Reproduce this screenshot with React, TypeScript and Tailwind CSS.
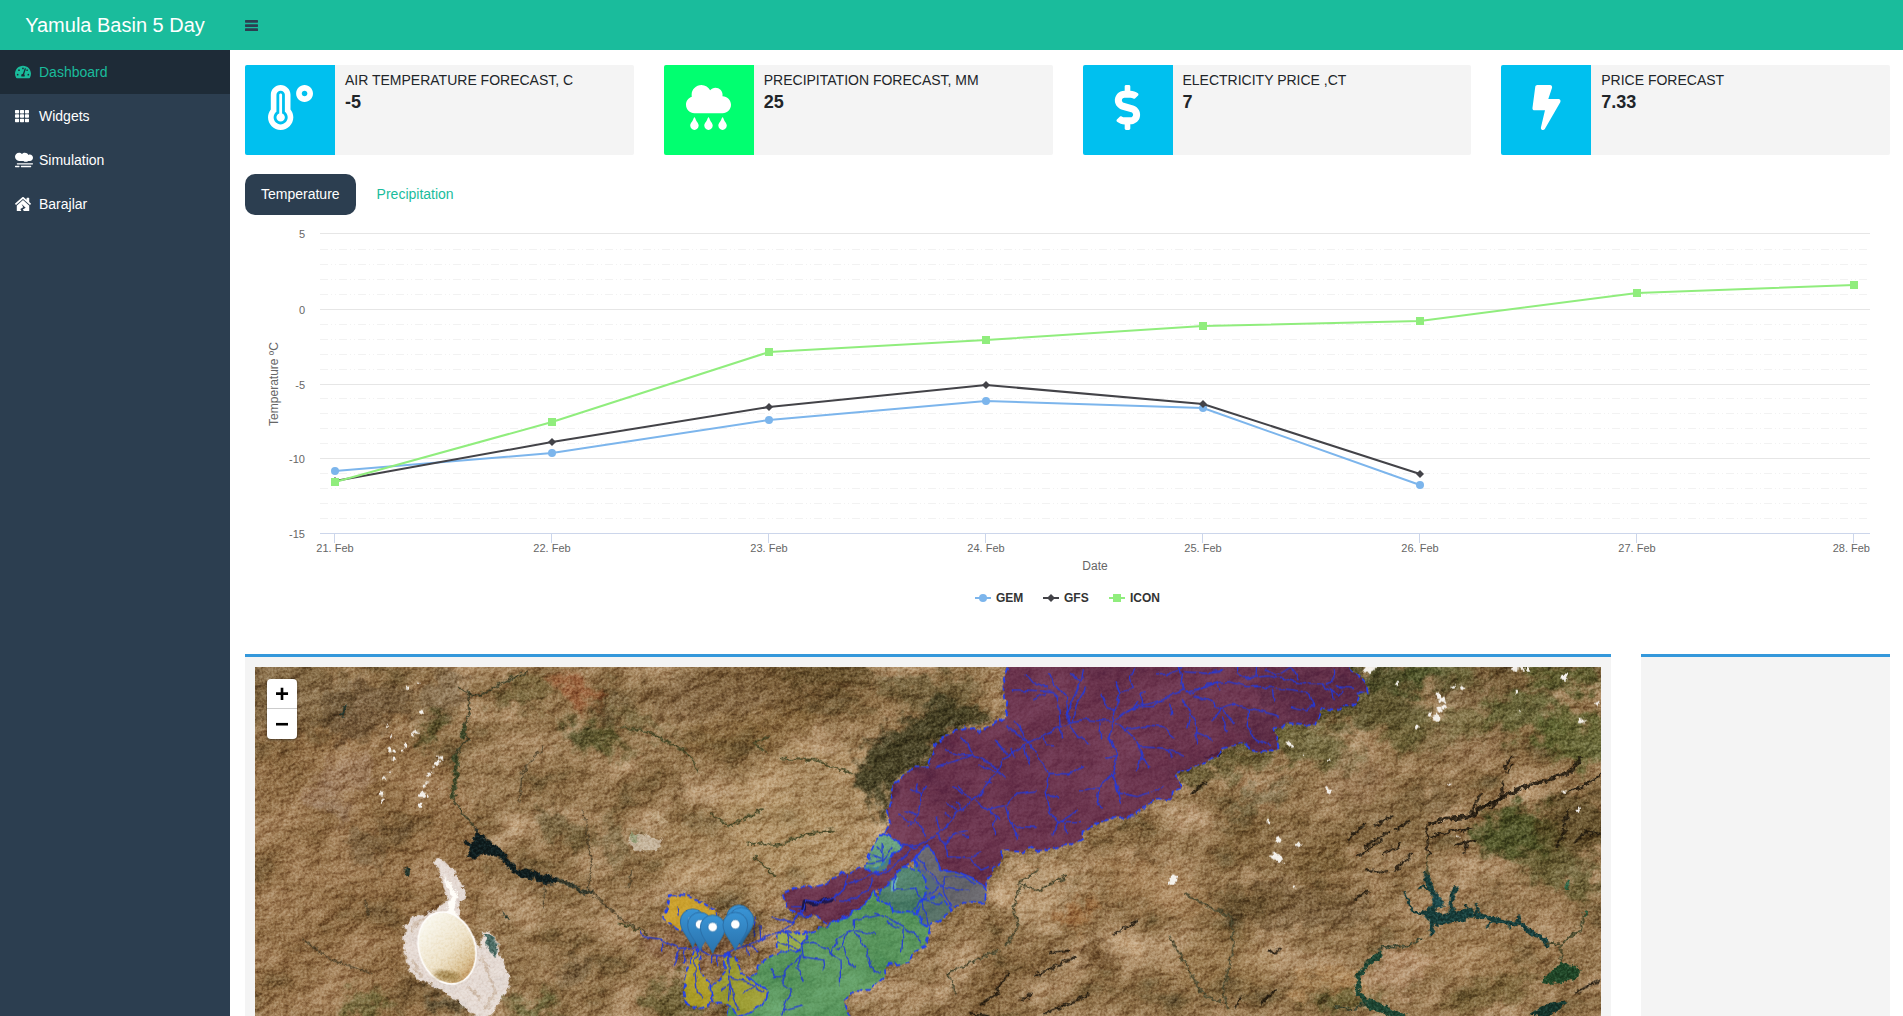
import { useState } from "react";
import type { ReactNode } from "react";
import {
  FaBolt,
  FaDollarSign,
  FaCloudRain,
  FaHouseDamage,
  FaSmog,
  FaTachometerAlt,
  FaTemperatureHigh,
  FaTh,
} from "react-icons/fa";

const navItems = [
  { label: "Dashboard", icon: <FaTachometerAlt className="size-4" />, active: true },
  { label: "Widgets", icon: <FaTh className="size-3.5" />, active: false },
  { label: "Simulation", icon: <FaSmog className="size-[18px]" />, active: false },
  { label: "Barajlar", icon: <FaHouseDamage className="size-4" />, active: false },
];

const cards: { title: string; value: string; color: string; icon: ReactNode }[] = [
  { title: "Air Temperature Forecast, C", value: "-5", color: "bg-[#00c0ef]", icon: <FaTemperatureHigh /> },
  { title: "Precipitation Forecast, mm", value: "25", color: "bg-[#01ff70]", icon: <FaCloudRain /> },
  { title: "Electricity Price ,ct", value: "7", color: "bg-[#00c0ef]", icon: <FaDollarSign /> },
  { title: "Price Forecast", value: "7.33", color: "bg-[#00c0ef]", icon: <FaBolt /> },
];

/* ---------- Chart ---------- */

const major = [
  { label: "5", y: 10 },
  { label: "0", y: 86 },
  { label: "-5", y: 161 },
  { label: "-10", y: 235 },
  { label: "-15", y: 310 },
];
const minor = [26, 41, 56, 71, 101, 116, 131, 146, 175, 190, 205, 220, 250, 265, 280, 295];
const days = [21, 22, 23, 24, 25, 26, 27, 28];
const dayX = [90, 307, 524, 741, 958, 1175, 1392, 1609];

const series = [
  { name: "GEM", color: "#7cb5ec", legendX: 730, ys: [248, 230, 197, 178, 185, 262] },
  { name: "GFS", color: "#434348", legendX: 798, ys: [258, 219, 184, 162, 181, 251] },
  { name: "ICON", color: "#90ed7d", legendX: 864, ys: [259, 199, 129, 117, 103, 98, 70, 62] },
];

function Marker({ name, x, y, color }: { name: string; x: number; y: number; color: string }) {
  if (name === "GEM") return <circle cx={x} cy={y} r={4} fill={color} />;
  if (name === "GFS") return <path d={`M${x} ${y - 4}l4 4l-4 4l-4-4z`} fill={color} />;
  return <rect x={x - 4} y={y - 4} width={8} height={8} fill={color} />;
}

function TemperatureChart() {
  return (
    <svg
      viewBox="0 0 1645 400"
      className="mt-2 block w-full"
      role="img"
      aria-label="Temperature forecast by model"
      fontFamily="'Liberation Sans', Arial, sans-serif"
    >
      {minor.map((y) => (
        <path key={y} d={`M75 ${y + 0.5}H1625`} stroke="#f2f2f2" strokeDasharray="8 3 1 3 1 3" />
      ))}
      {major.map(({ label, y }) => (
        <g key={label}>
          <path d={`M75 ${y + 0.5}H1625`} stroke={label === "-15" ? "#ccd6eb" : "#e6e6e6"} />
          <text x={60} y={y + 5} textAnchor="end" fontSize={11} fill="#666">
            {label}
          </text>
        </g>
      ))}
      {days.map((day, i) => (
        <g key={day}>
          <path d={`M${dayX[i] - 0.5} 311v9`} stroke="#ccd6eb" />
          <text
            x={i === 7 ? 1625 : dayX[i]}
            y={329}
            textAnchor={i === 7 ? "end" : "middle"}
            fontSize={11}
            fill="#666"
          >
            {`${day}. Feb`}
          </text>
        </g>
      ))}
      <text x={850} y={347} textAnchor="middle" fontSize={12} fill="#666">
        Date
      </text>
      <text transform="translate(33 161) rotate(-90)" textAnchor="middle" fontSize={12} fill="#666">
        Temperature ºC
      </text>
      {series.map((s) => (
        <g key={s.name}>
          <polyline
            points={s.ys.map((y, i) => `${dayX[i]},${y}`).join(" ")}
            fill="none"
            stroke={s.color}
            strokeWidth={2}
            strokeLinejoin="round"
          />
          {s.ys.map((y, i) => (
            <Marker key={i} name={s.name} x={dayX[i]} y={y} color={s.color} />
          ))}
          <path d={`M${s.legendX} 375h16`} stroke={s.color} strokeWidth={2} />
          <Marker name={s.name} x={s.legendX + 8} y={375} color={s.color} />
          <text x={s.legendX + 21} y={379} fontSize={12} fontWeight="bold" fill="#333">
            {s.name}
          </text>
        </g>
      ))}
    </svg>
  );
}

/* ---------- Map ---------- */

type Blob = [x: number, y: number, rx: number, ry: number, rotate: number, color: string, opacity: number];

const groundTones: Blob[] = [
  [260, 700, 420, 500, 0, "#946c42", 0.4],
  [100, 170, 200, 120, 0, "#6a5330", 0.5],
  [330, 210, 160, 70, -20, "#59452c", 0.5],
  [560, 160, 90, 60, -60, "#6b5a3e", 0.5],
  [250, 420, 120, 50, -30, "#a98a70", 0.5],
  [230, 500, 60, 30, 10, "#a48a76", 0.5],
  [330, 620, 60, 50, 0, "#6c5636", 0.55],
  [970, 150, 80, 34, 25, "#a3532e", 0.5],
  [830, 150, 70, 40, 0, "#685a2d", 0.6],
  [760, 180, 50, 30, 0, "#5b5229", 0.5],
  [530, 270, 26, 70, 38, "#47481f", 0.7],
  [1000, 285, 90, 34, 15, "#474a20", 0.75],
  [1080, 320, 70, 20, 15, "#5a5528", 0.6],
  [1160, 250, 90, 18, 20, "#4d5125", 0.6],
  [910, 560, 100, 34, 35, "#5f5430", 0.55],
  [1080, 610, 70, 50, 50, "#62552f", 0.5],
  [960, 980, 60, 40, 0, "#5c4b2b", 0.55],
  [340, 1090, 70, 34, 0, "#5f6330", 0.6],
  [830, 1110, 70, 30, 0, "#596030", 0.6],
  [570, 1090, 60, 35, 30, "#544a30", 0.7],
  [820, 700, 30, 60, -50, "#6c5232", 0.5],
  [1280, 200, 220, 110, 0, "#a58962", 0.35],
  [1500, 150, 330, 90, -5, "#6b512b", 0.55],
  [1480, 280, 200, 60, -10, "#80602f", 0.4],
  [1720, 100, 160, 40, 0, "#5c4a25", 0.6],
  [2020, 150, 160, 40, 0, "#57502b", 0.5],
  [1250, 420, 60, 30, 20, "#6e5229", 0.5],
  [1700, 520, 300, 200, 0, "#c4a478", 0.4],
  [1500, 640, 300, 160, 0, "#c3a375", 0.35],
  [1250, 1080, 90, 60, 0, "#565427", 0.55],
  [1330, 920, 160, 70, 0, "#8a5f44", 0.5],
  [2150, 1080, 300, 60, -30, "#7d5e36", 0.5],
  [2360, 760, 140, 100, 0, "#d6b891", 0.5],
  [2460, 820, 60, 40, -30, "#9c6534", 0.6],
  [2660, 640, 30, 28, 0, "#6b4f2b", 0.8],
  [2530, 935, 36, 34, 0, "#6b4b28", 0.8],
  [2700, 740, 200, 70, 20, "#b0865a", 0.4],
  [2800, 530, 60, 16, 20, "#d3b495", 0.6],
  [3000, 480, 120, 18, -28, "#5d5837", 0.6],
  [2920, 370, 180, 40, -15, "#57532a", 0.6],
  [3120, 300, 220, 60, 20, "#5b5b2c", 0.65],
  [3260, 180, 260, 80, 10, "#4f4f27", 0.65],
  [3420, 110, 160, 40, 0, "#39411d", 0.7],
  [3560, 100, 120, 60, 0, "#4a5524", 0.6],
  [3720, 150, 200, 60, 0, "#66502b", 0.5],
  [3930, 110, 120, 40, 0, "#45511f", 0.65],
  [3800, 220, 120, 60, 0, "#4f5a28", 0.6],
  [3960, 300, 120, 70, 20, "#4c5a23", 0.65],
  [3560, 270, 170, 50, -10, "#606032", 0.55],
  [3620, 320, 130, 50, 0, "#9c7b58", 0.5],
  [3300, 420, 90, 80, 0, "#aa8866", 0.5],
  [3120, 800, 230, 70, 5, "#634a28", 0.55],
  [3100, 620, 170, 90, 0, "#6c5129", 0.45],
  [3400, 560, 150, 90, 0, "#7d643b", 0.5],
  [3520, 480, 80, 50, 0, "#6a542f", 0.5],
  [3780, 580, 130, 75, -10, "#3d4a1c", 0.8],
  [3950, 560, 120, 90, 0, "#54441f", 0.7],
  [3900, 680, 150, 60, 25, "#4f5225", 0.55],
  [3700, 800, 260, 80, 0, "#a88760", 0.45],
  [3640, 940, 280, 70, 0, "#aa865a", 0.4],
  [3430, 980, 90, 70, 0, "#cba987", 0.6],
  [3230, 1030, 120, 50, 0, "#caa06c", 0.5],
  [3270, 1085, 110, 26, 0, "#565726", 0.6],
  [3700, 1060, 150, 40, -20, "#6e5e30", 0.5],
  [2900, 980, 160, 90, 0, "#9a7a4b", 0.4],
];

const clouds: [number, number, number][] = [
  [455, 145, 5], [490, 125, 4], [500, 215, 6], [395, 258, 5], [483, 275, 6], [475, 285, 4], [408, 290, 5],
  [452, 320, 7], [440, 330, 5], [405, 330, 7], [418, 335, 6], [415, 355, 6], [405, 395, 4], [385, 415, 4],
  [380, 460, 6], [383, 480, 5], [556, 352, 7], [547, 368, 7], [538, 382, 5], [530, 395, 5], [520, 405, 5],
  [510, 435, 6], [502, 463, 8], [495, 497, 7], [520, 470, 4], [550, 445, 3],
  [3040, 545, 6], [3070, 600, 9], [3060, 650, 12], [3075, 660, 9], [3130, 615, 7], [3120, 740, 4], [3220, 452, 8],
  [2755, 715, 12], [2750, 728, 8], [3100, 310, 6], [3110, 318, 5], [3220, 362, 4], [3145, 345, 3],
  [3340, 88, 10], [3355, 82, 9], [3425, 127, 5], [3550, 165, 9], [3560, 180, 10], [3552, 208, 8], [3565, 200, 6],
  [3545, 235, 11], [3528, 225, 6], [3570, 185, 6], [3595, 140, 6], [3620, 140, 5], [3785, 155, 6], [3930, 110, 10],
  [3925, 118, 7], [3800, 84, 9], [3820, 86, 7], [3780, 84, 8], [3485, 262, 6], [3978, 242, 8], [3795, 212, 3],
  [3930, 455, 5], [3585, 435, 5], [3970, 510, 5], [3610, 590, 4], [4030, 190, 7],
];

const ridges = [
  "M3525 552L3570 536L3640 532L3690 498L3750 468L3805 440L3875 422L3945 396L3978 356",
  "M3640 535L3662 492L3678 462M3655 530L3672 500M3690 500L3735 470L3712 505M3738 480L3744 425",
  "M3945 452L3985 440L4038 404M3925 560L3942 510M3905 620L3930 570M3600 615L3660 602M3625 640L3640 600",
  "M3745 385L3770 352M3755 395L3775 368M3530 590L3580 575L3650 565M3515 560L3520 640",
  "M3310 650L3380 600M3330 620L3400 575M3360 560L3415 525M3390 640L3440 610M3280 600L3330 550M3420 570L3460 545",
  "M3330 690L3395 697M3300 780L3340 750M3420 690L3470 640M3960 605L3990 578L4036 580M3960 1060L3990 1040L4038 1022",
  "M2340 1008L2400 980L2460 950M2380 940L2440 932M2580 880L2650 840M2300 1080L2330 1060",
  "M2815 458L2850 428M2850 352L2900 340M3040 935L3075 933M3020 1090L3060 1050M2940 1100L2960 1070",
  "M2180 1090L2230 1060M2260 1000L2220 1060M2150 1120L2200 1128M2370 1120L2470 1080L2500 1060",
];

const basinPaths = [
  {
    fill: "#5c1c4e",
    opacity: 0.72,
    d: "M1170 60L1165 86L1150 130L1152 175L1162 185L1155 235L1125 248L1078 276L1040 262L1000 275L960 300L942 312L942 340L922 382L875 382L850 410L818 432L812 475L803 515L812 545L795 575L850 618L820 645L770 685L735 685L670 700L620 730L575 742L545 735L487 760L500 800L530 822L575 825L605 840L630 855L690 820L730 798L765 755L800 735L830 700L880 655L925 612L940 640L965 690L1010 695L1060 715L1096 745L1100 720L1145 655L1148 630L1205 637L1228 622L1255 633L1355 612L1385 600L1388 575L1430 548L1475 535L1540 527L1600 480L1653 478L1655 455L1688 442L1665 400L1740 375L1800 342L1810 325L1880 310L1890 330L1925 337L1975 325L1965 270L2000 248L2040 255L2088 255L2108 205L2160 210L2170 195L2208 197L2215 157L2240 157L2235 125L2190 85L2185 60Z",
  },
  { fill: "#3da98a", opacity: 0.62, d: "M790 578L850 618L820 645L795 690L760 700L735 685L750 640L770 598Z" },
  {
    fill: "#2f8577",
    opacity: 0.68,
    d: "M880 655L885 685L850 680L820 712L790 740L775 765L775 782L810 790L820 815L870 820L895 818L905 790L930 765L960 740L920 700Z",
  },
  {
    fill: "#5c6478",
    opacity: 0.75,
    d: "M882 655L925 612L940 640L965 690L1010 695L1060 715L1098 750L1095 788L1030 785L995 810L960 770L905 785L925 745L905 700Z",
  },
  { fill: "#4b7472", opacity: 0.78, d: "M905 780L960 765L995 812L930 858L900 850L895 820Z" },
  {
    fill: "#3ca765",
    opacity: 0.66,
    d: "M765 755L775 785L810 790L820 815L895 820L902 850L930 862L918 920L880 935L865 970L805 975L790 1010L750 1050L710 1050L672 1085L690 1128V1150H310L330 1095L355 1128L385 1120L430 1090L442 1055L395 1020L430 960L480 935L530 935L570 880L620 858L690 820L730 798Z",
  },
  { fill: "#93b845", opacity: 0.72, d: "M470 880L500 873L545 880L568 876L530 935L480 935L470 920Z" },
  {
    fill: "#a0ab2c",
    opacity: 0.74,
    d: "M318 945L345 950L362 1000L400 1025L442 1055L430 1090L385 1120L355 1130L325 1092L280 1090L272 1045L300 1020L318 985Z",
  },
  {
    fill: "#bdb021",
    opacity: 0.74,
    d: "M222 930L212 970L200 1000L190 1040L200 1090L240 1108L274 1090L270 1030L240 1000L238 930Z",
  },
  { fill: "#dcae22", opacity: 0.74, d: "M150 765L210 770L285 810L285 870L180 870L150 850L127 835L145 800Z" },
];

const rivers = [
  "M58 872L70 890L125 898L175 925L235 922L275 945L310 948L345 928L375 918L420 902L490 870L520 850L550 812L560 780L600 790L640 772L680 735L745 705L795 700L830 670L885 622L945 590L1010 520L1065 478L1130 400L1150 360L1225 310L1260 290L1300 270L1350 250L1400 240L1480 245L1520 210L1570 195L1630 180L1690 150L1720 160L1760 130L1830 125L1880 140L1940 140L2020 150L2070 160L2078 195L2060 210L2010 200",
  "M870 448L905 462L890 545L918 590M852 510L890 525M832 522L885 550L860 555M895 430L888 462M920 435L905 465M885 625L850 615M850 618L905 612",
  "M1025 295L1065 345L1020 345L975 328M1060 345L950 380M1065 348L1125 380L1158 415M1075 375L1130 395M1095 425L1115 432",
  "M1015 435L1030 460L1060 480M1000 440L1028 465M985 485L1010 515M1008 485L1025 510M975 520L990 535M948 530L960 570",
  "M1065 480L1100 510L1160 495L1190 460L1250 452M1160 498L1170 545L1185 570L1190 602M1125 525L1118 555L1130 585M1168 545L1205 560L1250 562M1105 505L1140 540",
  "M948 582L975 610L980 650L1050 655L1085 635M1050 655L1080 690L1110 680M975 610L1000 585L1040 570M1000 585L1050 590",
  "M1165 345L1125 300M1225 310L1185 240M1225 310L1160 260M1230 380L1215 315M1185 350L1170 320",
  "M1175 150L1220 150L1300 155L1315 170L1320 255L1325 295M1215 100L1240 132L1290 145M1285 100L1300 130L1340 175L1345 245M1240 180L1275 160",
  "M1350 250L1345 215L1385 120L1390 85M1400 140L1365 200L1360 245M1385 125L1350 100M1350 260L1370 290L1408 310M1270 290L1275 315L1305 318",
  "M1225 315L1250 340L1285 400L1278 450L1290 520L1320 545L1380 545M1285 400L1345 402L1395 380M1285 460L1315 480M1320 545L1298 582M1320 545L1370 515M1335 550L1340 578",
  "M1480 245L1470 295L1490 350L1478 400L1435 440L1380 453M1475 400L1500 460L1550 470L1600 455L1635 435M1435 440L1430 480L1445 505M1480 410L1505 488M1490 350L1455 355",
  "M1485 245L1480 220L1500 160L1485 120M1500 160L1540 145L1530 110L1545 85M1445 160L1455 190L1480 215M1440 248L1442 298",
  "M1490 250L1540 290L1555 320L1570 350L1590 385M1520 270L1580 258L1625 262L1665 295M1555 320L1640 325L1695 352M1570 350L1545 390M1640 325L1655 350",
  "M1690 150L1680 100L1670 60M1700 155L1740 145L1790 125L1800 150M1720 170L1765 180L1800 205L1840 190L1885 208L1930 215L1980 230M1885 208L1885 260L1900 290L1950 320M1800 205L1775 240M1805 205L1845 255M1810 235L1822 275",
  "M1650 190L1652 225M1680 175L1710 210L1730 260L1732 310M1730 280L1775 300M1710 230L1700 265M1605 102L1650 100L1690 85M1690 95L1760 100L1810 95",
  "M1850 75L1850 95L1880 115L1940 108L2000 118L2040 130L2100 135L2155 165L2170 150M2140 85L2142 120L2115 135M1910 70L1908 110M1940 90L1970 105L2020 85L2035 118M2130 140L2140 180M2150 140L2200 145M1960 150L1965 185",
  "M1570 195L1560 160L1580 155M1570 200L1600 200L1625 180M1520 215L1555 190",
  "M790 610L788 665L820 625M745 670L790 660M755 645L785 655M770 620L790 640",
  "M820 750L880 745L905 775L880 820M825 700L820 745M905 775L945 790L965 790M905 775L965 740L1048 752M965 740L890 650M965 740L975 715L1035 710L1065 735M905 775L925 855M965 740L995 800",
  "M680 700L675 745L640 765M680 785L745 750L760 715M660 780L695 785M545 800L520 800M550 812L530 810M640 770L650 785M575 825L530 830L520 850L455 830",
  "M490 870L545 915L550 950L605 960L610 995M545 915L580 910L625 925L635 945L660 960L662 1040M545 945L500 985L485 1030L515 1048L490 1110M530 985L550 1025M545 945L535 985",
  "M635 945L650 895L700 870L700 840L785 825L850 860L845 940M700 870L770 885M850 860L890 885L905 915M705 875L740 930L750 980L780 1000M670 915L680 950L705 985M785 825L760 820M840 865L800 845",
  "M490 1110L550 1095M490 1110L485 1128M450 985L460 1010L490 1010M500 880L510 930M470 905L540 930M650 930L670 900L695 872",
  "M235 922L225 970L225 1000L232 1060L248 1075M325 940L330 1030L340 1075L358 1115M330 1015L380 1025L430 1058M330 1030L305 1050M330 1035L325 1080M405 1032L370 1060",
  "M125 898L125 935M180 925L162 980M195 925L190 970M275 945L275 970M290 948L290 978M380 920L382 950M390 915L415 930M422 900L420 855M172 800L175 830M400 890L410 830",
];

const pins: [number, number][] = [
  [218, 922],
  [240, 932],
  [278, 940],
  [357, 910],
  [364, 918],
  [346, 932],
];

function MapView() {
  return (
    <svg
      viewBox="0 81 4038 1047"
      preserveAspectRatio="xMinYMin slice"
      className="absolute inset-0 h-full w-full"
      role="img"
      aria-label="Satellite map of the Yamula basin"
    >
      <defs>
        <filter id="ground" x="0" y="0" width="1" height="1" colorInterpolationFilters="sRGB">
          <feTurbulence type="fractalNoise" baseFrequency="0.006 0.008" numOctaves="8" seed="11" />
          <feColorMatrix values="1 0 0 0 0 1 0 0 0 0 1 0 0 0 0 0 0 0 0 1" />
          <feComponentTransfer>
            <feFuncR type="table" tableValues="0.3 0.38 0.47 0.55 0.61 0.67 0.72 0.78 0.84" />
            <feFuncG type="table" tableValues="0.24 0.31 0.38 0.43 0.49 0.545 0.6 0.66 0.73" />
            <feFuncB type="table" tableValues="0.15 0.19 0.23 0.27 0.33 0.39 0.45 0.51 0.59" />
          </feComponentTransfer>
        </filter>
        <filter id="relief" x="0" y="0" width="1" height="1" colorInterpolationFilters="sRGB">
          <feTurbulence type="fractalNoise" baseFrequency="0.022 0.03" numOctaves="5" seed="4" result="n" />
          <feColorMatrix in="n" values="0 0 0 0 0 0 0 0 0 0 0 0 0 0 0 1 0 0 0 0" />
          <feDiffuseLighting surfaceScale="17" diffuseConstant="0.72" lightingColor="#ffffff">
            <feDistantLight azimuth="225" elevation="45" />
          </feDiffuseLighting>
        </filter>
        <filter id="grain" x="0" y="0" width="1" height="1" colorInterpolationFilters="sRGB">
          <feTurbulence type="fractalNoise" baseFrequency="0.14" numOctaves="2" seed="8" />
          <feColorMatrix values="2 0 0 0 -0.5 2 0 0 0 -0.5 2 0 0 0 -0.5 0 0 0 0 1" />
        </filter>
        <filter id="patch" x="-0.2" y="-0.2" width="1.4" height="1.4" colorInterpolationFilters="sRGB">
          <feTurbulence type="fractalNoise" baseFrequency="0.02" numOctaves="5" seed="3" result="n" />
          <feGaussianBlur in="SourceGraphic" stdDeviation="14" />
          <feDisplacementMap in2="n" scale="130" xChannelSelector="R" yChannelSelector="G" />
        </filter>
        <filter id="rough" x="-0.05" y="-0.05" width="1.1" height="1.1" colorInterpolationFilters="sRGB">
          <feTurbulence type="fractalNoise" baseFrequency="0.06" numOctaves="3" seed="5" result="n" />
          <feDisplacementMap in="SourceGraphic" in2="n" scale="22" xChannelSelector="R" yChannelSelector="G" />
        </filter>
        <filter id="jag" x="-0.05" y="-0.05" width="1.1" height="1.1" colorInterpolationFilters="sRGB">
          <feTurbulence type="fractalNoise" baseFrequency="0.04" numOctaves="1" seed="9" result="n" />
          <feDisplacementMap in="SourceGraphic" in2="n" scale="22" xChannelSelector="R" yChannelSelector="G" />
        </filter>
        <filter id="soft">
          <feGaussianBlur stdDeviation="8" />
        </filter>
        <linearGradient id="lake" x1="0.3" y1="0" x2="0.7" y2="1">
          <stop offset="0" stopColor="#fbfaf2" />
          <stop offset="0.55" stopColor="#eee2c8" />
          <stop offset="0.8" stopColor="#dcc498" />
          <stop offset="1" stopColor="#c0935a" />
        </linearGradient>
        <linearGradient id="pin" x1="0" y1="0" x2="0" y2="1">
          <stop offset="0" stopColor="#3a95d6" />
          <stop offset="1" stopColor="#2a72ac" />
        </linearGradient>
      </defs>

      <rect y="81" width="4038" height="1047" filter="url(#ground)" />
      <g filter="url(#patch)">
        {groundTones.map(([x, y, rx, ry, rotate, color, opacity], i) => (
          <ellipse
            key={i}
            rx={rx}
            ry={ry}
            fill={color}
            opacity={opacity}
            transform={`translate(${x} ${y}) rotate(${rotate})`}
          />
        ))}
        <path
          d="M1855 300L1955 250L1995 210L2055 180L2155 200L2215 240L2135 262L2055 300L2020 380L1955 400L1910 430L1895 520L1870 560L1855 470L1795 410L1825 370L1820 320Z"
          fill="#34351a"
          opacity="0.8"
        />
      </g>
      <rect y="81" width="4038" height="1047" filter="url(#relief)" className="mix-blend-soft-light" opacity="0.6" />

      {/* streams and ridges */}
      <g fill="none" filter="url(#rough)" strokeLinecap="round" strokeLinejoin="round">
        <path
          d="M815 95L735 130L690 160L640 165M610 140L645 165L640 220L625 270L643 295L615 325L600 360L605 400L590 470L630 530L660 560"
          stroke="#3b3d26"
          strokeWidth="5"
        />
        <path d="M602 350L604 400L592 470M628 262L622 290" stroke="#3c4526" strokeWidth="15" />
        <path
          d="M1000 745L1055 800L1105 840L1175 880M865 320L800 400L795 480M985 510L1000 600L1010 680L1000 740M870 740L865 800M145 900L230 960L350 1000M330 780L340 830M1130 690L1120 740"
          stroke="#4b4029"
          strokeWidth="4"
        />
        <path
          d="M1095 260L1180 275L1300 340L1330 390M1580 355L1680 360L1790 400M1480 610L1580 615L1640 585L1740 570M1500 650L1560 710M1370 520L1420 560L1520 510M1095 850L1150 870M1500 310L1540 290M1500 310L1530 335"
          stroke="#4a4a28"
          strokeWidth="6"
        />
        <path
          d="M2295 740L2275 800L2290 860L2250 920M2300 735L2350 750L2430 710M2350 690L2290 730M2740 890L2780 950L2840 1060L2900 1090M2930 840L2935 920L2905 1060L2920 1110M2790 760L2880 810L2930 830M2100 1060L2080 1000L2160 960L2230 930"
          stroke="#4d4a30"
          strokeWidth="6"
        />
        {ridges.map((d, i) => (
          <path key={d} d={d} stroke="#1c150c" strokeWidth={i === 0 ? 11 : 7} opacity="0.85" />
        ))}
      </g>

      {/* lakes and reservoirs */}
      <g filter="url(#rough)">
        <path
          d="M660 560L675 580L700 600L725 620L750 640L760 660L790 688L825 688L865 703L910 712L905 728L865 734L835 716L795 712L760 687L735 650L710 645L685 640L660 658L635 655L645 630L628 600L650 605L660 590Z"
          fill="#0f1c1d"
        />
        <path d="M905 720L955 737L990 760L1015 750" fill="none" stroke="#34382a" strokeWidth="11" />
        <path
          d="M535 668L557 652L595 690L630 750L630 780L610 785L615 855L660 900L675 925L685 870L705 875L730 910L735 950L755 990L765 1040L720 1110L695 1140L660 1128L615 1090L535 1035L485 1020L460 980L445 920L450 860L470 830L545 810L580 775L565 740L555 690Z"
          fill="#f0e8e6"
          opacity="0.88"
        />
        <path
          d="M470 880L480 850L540 822L600 825M470 960L500 1010M680 950L700 1000L720 1050L690 1110M640 1040L680 1080"
          fill="none"
          stroke="#c9b3a0"
          strokeWidth="9"
          opacity="0.7"
        />
        <path d="M565 700L585 730L605 760L600 800L605 850L570 815L590 770Z" fill="#fffdf8" />
        <path d="M685 878L708 884L728 915L724 958L700 925Z" fill="#4a6a62" />
        <path d="M1145 580L1225 600L1210 630L1140 632L1120 600Z" fill="#d9cdbb" opacity="0.7" />
        <path d="M1125 575L1150 585L1145 605L1128 600Z" fill="#8f9a72" opacity="0.8" />
        <path d="M1200 510L1230 540L1220 555L1190 530Z" fill="#cbb592" opacity="0.6" />
        <path
          d="M450 680l14 8l-4 24l-10 -6z M265 195l10 0l-8 40l-10 -8z M740 810l22 26l-12 -2z"
          fill="#25352b"
        />
        <g fill="none" stroke="#173c39" strokeLinejoin="round" strokeLinecap="round">
          <path d="M3516 705L3525 740L3542 765L3540 800L3522 822" strokeWidth="18" />
          <path d="M3540 775L3556 792" strokeWidth="24" stroke="#1d4b4d" />
          <path d="M3522 822L3555 842L3595 830L3640 820" strokeWidth="32" />
          <path d="M3590 820L3590 770L3604 742M3530 840L3530 882" strokeWidth="13" />
          <path d="M3640 822L3690 830L3745 845L3795 850L3830 880L3865 895L3875 915" strokeWidth="15" />
          <path
            d="M3450 760L3475 815L3522 822M3495 740L3520 748M3664 825L3664 795M3638 820L3632 795M3700 860L3712 840M3765 865L3760 845M3795 850L3792 830"
            strokeWidth="8"
          />
          <path
            d="M3875 910L3920 915L3950 885L3978 870L3990 810M3918 915L3920 970M3515 640L3517 700"
            stroke="#4b4a2c"
            strokeWidth="6"
          />
          <path d="M3375 945L3340 968L3312 1008L3308 1055L3335 1088" strokeWidth="15" stroke="#1e4532" />
          <path d="M3330 1085L3380 1105L3440 1132" strokeWidth="24" stroke="#1e4532" />
          <path
            d="M3240 1100L3290 1108L3330 1092M3370 940L3380 918L3450 920L3500 895"
            strokeWidth="6"
            stroke="#3e4630"
          />
        </g>
        <path d="M3865 1015L3920 965L3980 990L3965 1012L3915 1030L3868 1032Z" fill="#1f4526" />
        <path d="M3822 1122L3875 1092L3938 1084L3915 1110L3865 1130Z" fill="#14332a" />
        <path d="M3930 725l12 0l0 28l-10 0zM3985 810l10 0l-4 20z" fill="#2d6242" />
      </g>
      <ellipse
        cx="576"
        cy="924"
        rx="84"
        ry="110"
        transform="rotate(-18 576 924)"
        fill="url(#lake)"
        stroke="#fffdfb"
        strokeWidth="5"
      />
      <ellipse cx="578" cy="1008" rx="40" ry="14" transform="rotate(8 578 1008)" fill="#a5884f" filter="url(#soft)" />
      <g fill="#f4f0ea" filter="url(#rough)">
        {clouds.map(([x, y, r], i) => (
          <circle key={i} cx={x} cy={y} r={r} />
        ))}
      </g>
      <rect y="81" width="4038" height="1047" filter="url(#grain)" className="mix-blend-soft-light" opacity="0.35" />

      {/* sub-basins, river network and stations */}
      <g transform="translate(1095 0)">
        <g filter="url(#jag)" strokeLinejoin="round">
          {basinPaths.map((b) => (
            <path
              key={b.d}
              d={b.d}
              fill={b.fill}
              fillOpacity={b.opacity}
              stroke="#2340f0"
              strokeWidth="5"
              strokeDasharray="17 9"
            />
          ))}
          <path
            d="M550 812L555 785L580 790L610 785L638 778"
            fill="none"
            stroke="#1f1748"
            strokeWidth="14"
          />
          <path d="M815 720L832 715L828 750L812 750Z" fill="#6fb5c2" opacity="0.8" />
          {rivers.map((d) => (
            <path key={d} d={d} fill="none" stroke="#2238dc" strokeWidth="4" opacity="0.9" />
          ))}
        </g>
        {pins.map(([x, y]) => (
          <g key={x} transform={`translate(${x} ${y})`}>
            <path d="M0 0L38 -52L60 -70L58 -40Z" fill="#000" opacity="0.25" filter="url(#soft)" />
            <path
              d="M0 0C-8 -26 -37 -48 -37 -78A37 37 0 0 1 37 -78C37 -48 8 -26 0 0Z"
              fill="url(#pin)"
              stroke="#2b6fa8"
              strokeWidth="3"
            />
            <circle cy="-79" r="14" fill="#fff" stroke="#2b6fa8" strokeWidth="2" />
          </g>
        ))}
      </g>
    </svg>
  );
}

/* ---------- Page ---------- */

export default function App() {
  const [tab, setTab] = useState("Temperature");
  return (
    <div className="flex min-h-screen flex-col bg-white font-['Liberation_Sans',Arial,sans-serif] text-sm text-[#212529]">
      <header className="flex h-[50px] items-center bg-[#1abc9c]">
        <a href="#" className="w-[230px] text-center text-xl text-white">
          Yamula Basin 5 Day
        </a>
        <button type="button" aria-label="Toggle menu" className="px-[15px] text-[#2c3e50]">
          <svg viewBox="0 0 13 11" className="h-[11px] w-[13px]" fill="currentColor" aria-hidden="true">
            <rect width="13" height="2.7" rx="0.6" />
            <rect y="4.2" width="13" height="2.7" rx="0.6" />
            <rect y="8.3" width="13" height="2.7" rx="0.6" />
          </svg>
        </button>
      </header>

      <div className="flex flex-1">
        <nav className="w-[230px] shrink-0 bg-[#2c3e50]">
          {navItems.map((item) => (
            <a
              key={item.label}
              href="#"
              className={
                item.active
                  ? "flex h-11 items-center bg-[#1e2b37] pl-[15px] text-[#1abc9c]"
                  : "flex h-11 items-center pl-[15px] text-white"
              }
            >
              <span className="w-6">{item.icon}</span>
              {item.label}
            </a>
          ))}
        </nav>

        <main className="flex min-w-0 flex-1 flex-col pt-[15px] pr-[13px] pl-[15px]">
          <section className="grid grid-cols-4 gap-[30px]">
            {cards.map((card) => (
              <div key={card.title} className="flex h-[90px] overflow-hidden rounded-xs bg-[#f4f4f4]">
                <div className={`flex w-[90px] shrink-0 justify-center pt-5 text-[45px] text-white ${card.color}`}>
                  {card.icon}
                </div>
                <div className="px-2.5 py-[5px]">
                  <p className="leading-5 uppercase">{card.title}</p>
                  <p className="text-lg leading-6 font-bold">{card.value}</p>
                </div>
              </div>
            ))}
          </section>

          <div role="tablist" className="mt-[19px] flex gap-[5px]">
            {["Temperature", "Precipitation"].map((name) => (
              <button
                key={name}
                type="button"
                role="tab"
                aria-selected={tab === name}
                onClick={() => setTab(name)}
                className={
                  tab === name
                    ? "h-[41px] rounded-[10px] bg-[#2c3e50] px-4 pb-0.5 text-white"
                    : "h-[41px] rounded-[10px] px-4 pb-0.5 text-[#1abc9c]"
                }
              >
                {name}
              </button>
            ))}
          </div>

          <TemperatureChart />

          <section className="mt-[31px] grid flex-1 grid-cols-12 gap-[30px]">
            <div className="col-span-10 flex border-t-3 border-[#3498db] bg-[#f4f4f4] px-2.5 pt-2.5">
              <div className="relative min-h-[340px] flex-1 overflow-hidden">
                <MapView />
                <div className="absolute top-3 left-3 flex w-[30px] flex-col overflow-hidden rounded-sm bg-white text-black shadow-[0_1px_3px_rgba(0,0,0,0.5)]">
                  <button
                    type="button"
                    aria-label="Zoom in"
                    className="h-[30px] border-b border-[#ccc] text-2xl leading-[30px] font-bold"
                  >
                    +
                  </button>
                  <button type="button" aria-label="Zoom out" className="h-[30px] text-2xl leading-[30px] font-bold">
                    −
                  </button>
                </div>
              </div>
            </div>
            <div className="col-span-2 border-t-3 border-[#3498db] bg-[#f4f4f4]" />
          </section>
        </main>
      </div>
    </div>
  );
}
